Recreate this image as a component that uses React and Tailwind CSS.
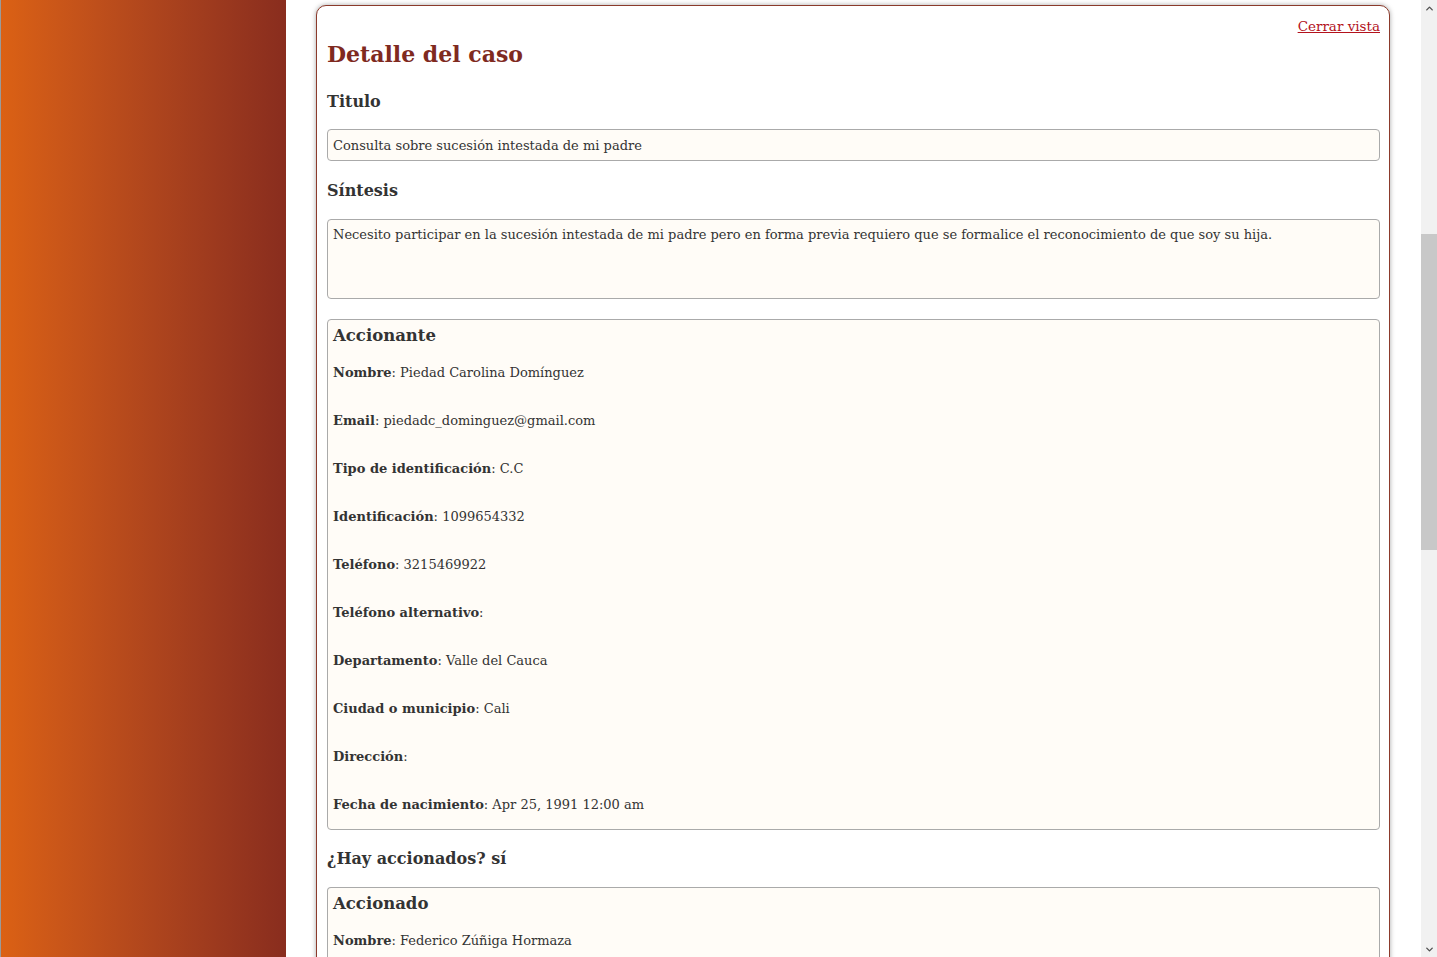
import { ChevronUp, ChevronDown } from 'lucide-react';

const accionante = [
    ['Nombre', 'Piedad Carolina Domínguez'],
    ['Email', 'piedadc_dominguez@gmail.com'],
    ['Tipo de identificación', 'C.C'],
    ['Identificación', '1099654332'],
    ['Teléfono', '3215469922'],
    ['Teléfono alternativo', ''],
    ['Departamento', 'Valle del Cauca'],
    ['Ciudad o municipio', 'Cali'],
    ['Dirección', ''],
    ['Fecha de nacimiento', 'Apr 25, 1991 12:00 am'],
];

const Field = ({ label, value }) => (
    <p className="h-[20px] leading-[20px]">
        <b className="font-bold">{label}</b>: {value}
    </p>
);

export default function App() {
    return (
        <div
            className="flex h-[957px] w-[1437px] overflow-hidden bg-white text-[13px] text-[#333]"
            style={{ fontFamily: '"DejaVu Serif", "Liberation Serif", serif' }}
        >
            <aside className="h-full w-[286px] shrink-0 border-l border-[#9a9a9a] bg-gradient-to-r from-[#db6114] to-[#892d1e]" />

            <main className="flex-1 overflow-hidden pl-[30px] pr-[31px] pt-[5px]">
                <div className="h-[980px] rounded-t-[10px] border border-[#8b3a2b] bg-white pl-[10px] pr-[9px] pt-[10px] shadow-[0_0_5px_rgba(0,0,0,0.35)]">
                    <div className="flex justify-end">
                        <a href="#" className="text-[13.5px] leading-[20px] text-[#b3121c] underline">Cerrar vista</a>
                    </div>
                    <h1 className="mt-[2px] text-[22px] font-bold leading-[32px] text-[#7f2a1f]">Detalle del caso</h1>

                    <h2 className="mt-[20px] text-[16px] font-bold leading-[24px]">Titulo</h2>
                    <div className="mt-[15px] h-[32px] rounded-[4px] border border-[#aaa] bg-[#fffcf7] px-[5px] pt-[2px] leading-[28px]">
                        Consulta sobre sucesión intestada de mi padre
                    </div>

                    <h2 className="mt-[18px] text-[16px] font-bold leading-[24px]">Síntesis</h2>
                    <div className="mt-[16px] h-[80px] rounded-[4px] border border-[#aaa] bg-[#fffcf7] px-[5px] pt-[5px] leading-[20px]">
                        Necesito participar en la sucesión intestada de mi padre pero en forma previa requiero que se formalice el reconocimiento de que soy su hija.
                    </div>

                    <section className="mt-[20px] rounded-[4px] border border-[#aaa] bg-[#fffcf7] px-[5px] pb-[14px] pt-[3px]">
                        <h3 className="text-[16.5px] font-bold leading-[26px]">Accionante</h3>
                        <div className="mt-[14px] flex flex-col gap-[28px]">
                            {accionante.map(([l, v]) => (
                                <Field key={l} label={l} value={v} />
                            ))}
                        </div>
                    </section>

                    <h2 className="mt-[17px] text-[16px] font-bold leading-[24px]">¿Hay accionados? sí</h2>

                    <section className="mt-[16px] rounded-t-[4px] border border-b-0 border-[#aaa] bg-[#fffcf7] px-[5px] pb-[14px] pt-[3px]">
                        <h3 className="text-[16.5px] font-bold leading-[26px]">Accionado</h3>
                        <div className="mt-[14px] flex flex-col gap-[28px]">
                            <Field label="Nombre" value="Federico Zúñiga Hormaza" />
                        </div>
                    </section>
                </div>
            </main>

            <div className="flex h-full w-[16px] shrink-0 flex-col bg-[#f1f1f1]">
                <div className="flex h-[16px] items-center justify-center text-[#505050]">
                    <ChevronUp size={11} strokeWidth={3} />
                </div>
                <div className="flex-1 pt-[218px]">
                    <div className="h-[316px] bg-[#c8c8c8]" />
                </div>
                <div className="flex h-[16px] items-center justify-center text-[#505050]">
                    <ChevronDown size={11} strokeWidth={3} />
                </div>
            </div>
        </div>
    );
}
